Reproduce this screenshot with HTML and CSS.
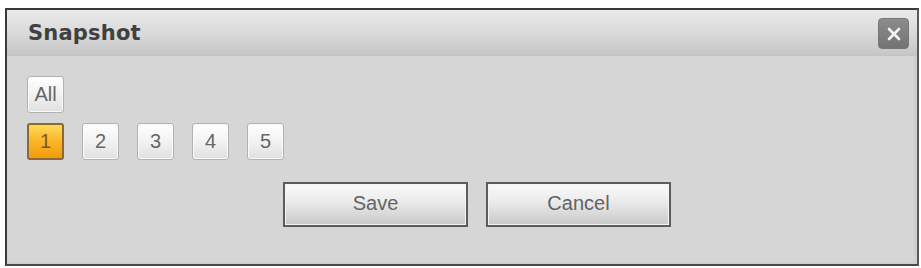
FILE: index.html
```html
<!DOCTYPE html>
<html>
<head>
<meta charset="utf-8">
<link rel="stylesheet" href="styles.css">
</head>
<body>
<div class="dialog">
  <div class="titlebar">
    <span class="title">Snapshot</span>
    <button class="close" aria-label="Close">
      <svg width="14" height="14" viewBox="0 0 14 14"><path d="M2 2L12 12M12 2L2 12" stroke="#f4f4f4" stroke-width="2.6" stroke-linecap="round"/></svg>
    </button>
  </div>
  <div class="content">
    <div class="row"><span class="chip">All</span></div>
    <div class="row nums">
      <span class="chip active">1</span>
      <span class="chip">2</span>
      <span class="chip">3</span>
      <span class="chip">4</span>
      <span class="chip">5</span>
    </div>
    <div class="actions">
      <button class="btn">Save</button>
      <button class="btn">Cancel</button>
    </div>
  </div>
</div>
</body>
</html>
```

FILE: styles.css
```css
* { box-sizing: border-box; }
html, body { margin: 0; padding: 0; background: #fff; }
body { font-family: "Liberation Sans", Arial, sans-serif; }

.dialog {
  margin: 8px 0 0 5px;
  width: 914px;
  height: 258px;
  border: 2px solid #3a3a3a;
  border-right-color: #5a5a5a;
  border-bottom-color: #4a4a4a;
  background: #d6d6d6;
  box-shadow: inset -3px -2px 0 #cfcfcf;
  display: flex;
  flex-direction: column;
}

.titlebar {
  height: 46px;
  flex: none;
  display: flex;
  align-items: center;
  justify-content: space-between;
  padding: 0 8px 0 21px;
  background: linear-gradient(#eaeaea, #dcdcdc 45%, #c6c6c6);
  border-bottom: 1px solid #c2c2c2;
}

.title {
  font-family: "DejaVu Sans", Verdana, sans-serif;
  font-weight: bold;
  font-size: 21px;
  letter-spacing: 0.2px;
  color: #404040;
}

.close {
  width: 31px;
  height: 31px;
  margin-top: 2px;
  border: 1px solid #777;
  border-radius: 4px;
  background: linear-gradient(#8c8c8c, #737373);
  display: flex;
  align-items: center;
  justify-content: center;
  padding: 0;
}

.content {
  padding: 20px 0 0 20px;
  display: flex;
  flex-direction: column;
}

.row { display: flex; }
.nums { margin-top: 10px; gap: 18px; }

.chip {
  width: 37px;
  height: 37px;
  display: flex;
  align-items: center;
  justify-content: center;
  font-size: 20px;
  color: #666;
  border: 1px solid #b2b2b2;
  border-radius: 3px;
  background: linear-gradient(#ffffff, #f2f2f2 50%, #e0e0e0);
  box-shadow: inset 0 0 0 1px #fafafa;
}

.chip.active {
  border: 2px solid #8a6a30;
  background: linear-gradient(#ffd95a, #fbb526 50%, #f39a10);
  color: #7a5a20;
  box-shadow: none;
}

.actions {
  display: flex;
  gap: 18px;
  margin-top: 22px;
  padding-left: 256px;
}

.btn {
  width: 185px;
  height: 45px;
  font-family: "Liberation Sans", Arial, sans-serif;
  font-size: 20px;
  color: #636363;
  border: 2px solid #5c5c5c;
  border-radius: 0;
  background: linear-gradient(#fafafa, #ececec 40%, #c9c9c9);
  box-shadow: inset 0 0 0 1px #f4f4f4;
  padding: 0 0 3px;
}
```
